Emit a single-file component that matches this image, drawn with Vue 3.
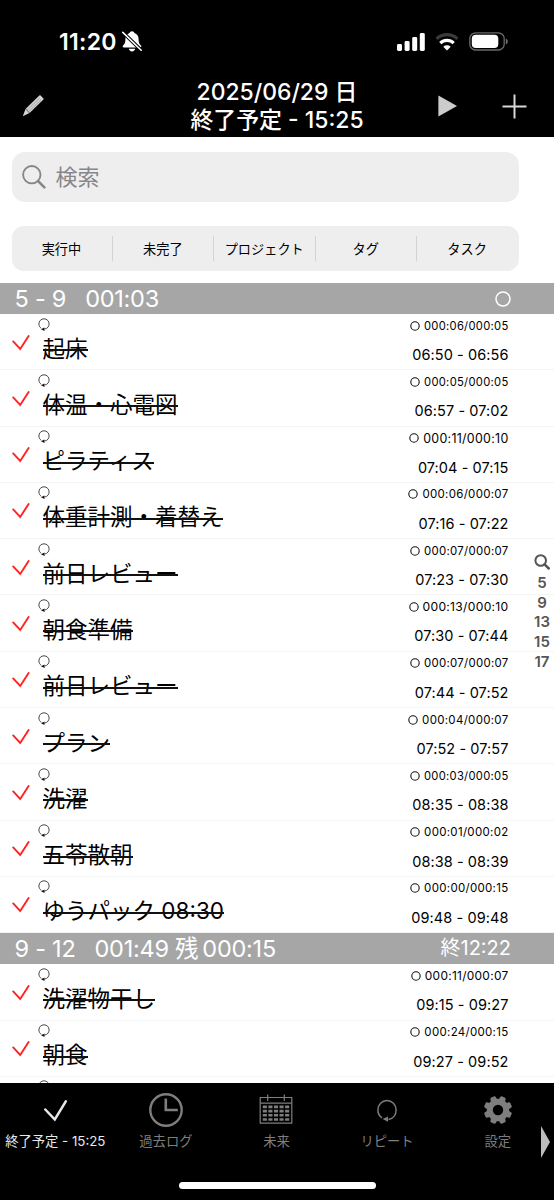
<script setup>
const filters = ['実行中', '未完了', 'プロジェクト', 'タグ', 'タスク'];

// size: font size of the spent/estimate label, fitted to its column
const sections = [
  {
    title: '5 - 9',
    total: '001:03',
    end: '',
    tasks: [
      { name: '起床', spent: '000:06/000:05', range: '06:50 - 06:56', size: 11.2 },
      { name: '体温・心電図', spent: '000:05/000:05', range: '06:57 - 07:02', size: 11.2 },
      { name: 'ピラティス', spent: '000:11/000:10', range: '07:04 - 07:15', size: 12.4 },
      { name: '体重計測・着替え', spent: '000:06/000:07', range: '07:16 - 07:22', size: 11.5 },
      { name: '前日レビュー', spent: '000:07/000:07', range: '07:23 - 07:30', size: 11.4 },
      { name: '朝食準備', spent: '000:13/000:10', range: '07:30 - 07:44', size: 12.1 },
      { name: '前日レビュー', spent: '000:07/000:07', range: '07:44 - 07:52', size: 11.4 },
      { name: 'プラン', spent: '000:04/000:07', range: '07:52 - 07:57', size: 11.5 },
      { name: '洗濯', spent: '000:03/000:05', range: '08:35 - 08:38', size: 11.2 },
      { name: '五苓散朝', spent: '000:01/000:02', range: '08:38 - 08:39', size: 11.5 },
      { name: 'ゆうパック 08:30', spent: '000:00/000:15', range: '09:48 - 09:48', size: 11.5 }
    ]
  },
  {
    title: '9 - 12',
    total: '001:49 残\u2009000:15',
    end: '終12:22',
    tasks: [
      { name: '洗濯物干し', spent: '000:11/000:07', range: '09:15 - 09:27', size: 11.9 },
      { name: '朝食', spent: '000:24/000:15', range: '09:27 - 09:52', size: 11.5 },
      { name: '', spent: '', range: '' }
    ]
  }
];

const indexes = ['5', '9', '13', '15', '17'];

const tabs = [
  { icon: 'check', label: '終了予定 - 15:25', active: true },
  { icon: 'clock', label: '過去ログ' },
  { icon: 'calendar', label: '未来' },
  { icon: 'repeat', label: 'リピート' },
  { icon: 'gear', label: '設定' }
];

const teeth = [22.5, 67.5, 112.5, 157.5, 202.5, 247.5, 292.5, 337.5];
</script>

<template>
  <div class="screen">
    <header class="top">
      <div class="status">
        <span class="clock">11:20</span>
        <svg class="bell" width="20" height="21" viewBox="0 0 20 21">
          <path d="M10 .3c-1.300 0-2.200.8-2.400 1.700C4.800 3 3.400 5.200 3.400 8c0 4-.9 5-2.400 6.600-.7.900-.3 1.800.8 1.800h16.400c1.100 0 1.500-.9.800-1.800C17.500 13 16.600 12 16.600 8c0-2.800-1.400-5-4.200-6C12.200 1.100 11.300.3 10 .3z" fill="#fff" />
          <path d="M6.800 17.800h6.400c-.3 1.500-1.500 2.600-3.200 2.600s-2.900-1.100-3.200-2.600z" fill="#fff" />
          <path d="M0 .6L20 19.900" stroke="#000" stroke-width="3.600" />
          <path d="M.8 1.400L19.200 19.200" stroke="#fff" stroke-width="1.600" stroke-linecap="round" />
        </svg>
        <span class="spacer"></span>
        <svg class="signal" width="28" height="18" viewBox="0 0 28 18">
          <g fill="#fff">
            <rect x="0" y="11" width="5" height="7" rx="1.400" />
            <rect x="7.600" y="8" width="5" height="10" rx="1.400" />
            <rect x="15.200" y="4" width="5" height="14" rx="1.400" />
            <rect x="22.800" y="0" width="5" height="18" rx="1.400" />
          </g>
        </svg>
        <svg class="wifi" width="24" height="18" viewBox="0 0 24 18">
          <path d="M1.600 5.900a15 15 0 0 1 20.800 0" fill="none" stroke="#3a3a3a" stroke-width="3.200" />
          <path d="M5.300 10.100a9.700 9.700 0 0 1 13.400 0" fill="none" stroke="#fff" stroke-width="3.200" />
          <path d="M12 17.600l-3.700-3.900a5.400 5.400 0 0 1 7.400 0z" fill="#fff" />
        </svg>
        <svg class="battery" width="39" height="19" viewBox="0 0 39 19">
          <rect x=".8" y=".8" width="34.400" height="17.200" rx="5.800" fill="none" stroke="#6b6b6b" stroke-width="1.300" />
          <rect x="2.800" y="2.800" width="26.500" height="13.200" rx="4" fill="#fff" />
          <path d="M36.800 6.500c1.300.5 2 1.600 2 2.900s-.7 2.400-2 2.900z" fill="#6b6b6b" />
        </svg>
      </div>
      <div class="nav">
        <svg class="pencil" width="22" height="22" viewBox="0 0 22 22">
          <path d="M17.300.4q.7-.5 1.300.1l2.800 2.900q.5.600 0 1.200L7.600 18 .8 21.300l2.700-7.400z" fill="#d4d4d4" />
          <path d="M17.600 3L5 15.200M19 4.700L6.500 16.900" stroke="#888" stroke-width=".7" />
          <path d="M3.500 13.900l4.100 4.100" stroke="#444" stroke-width=".8" />
        </svg>
        <h1>2025/06/29 日<br>終了予定 - 15:25</h1>
        <svg class="play" width="20" height="22" viewBox="0 0 20 22">
          <path d="M.4.4L19 11 .4 21.600z" fill="#ccc" />
        </svg>
        <svg class="plus" width="25" height="25" viewBox="0 0 25 25">
          <path d="M12.500.5v24M.5 12.500h24" stroke="#d8d8d8" stroke-width="2" />
        </svg>
      </div>
    </header>

    <main class="content">
      <div class="search">
        <svg width="24" height="24" viewBox="0 0 24 24">
          <circle cx="9.800" cy="9.700" r="8.700" fill="none" stroke="#86868b" stroke-width="1.900" />
          <path d="M16 16l6.400 6.400" stroke="#86868b" stroke-width="2.500" stroke-linecap="round" />
        </svg>
        <span>検索</span>
      </div>
      <div class="filters">
        <span v-for="f in filters" :key="f" class="filter">{{ f }}</span>
      </div>

      <section v-for="s in sections" :key="s.title">
        <div class="section-head">
          <span class="section-title">{{ s.title }}</span>
          <span class="section-total">{{ s.total }}</span>
          <span v-if="s.end" class="section-end">{{ s.end }}</span>
          <svg v-else class="ring" width="16" height="16" viewBox="0 0 16 16">
            <circle cx="8" cy="8" r="7" fill="none" stroke="#fff" stroke-width="1.500" />
          </svg>
        </div>
        <div v-for="(t, i) in s.tasks" :key="i" class="task">
          <svg v-if="t.name" class="check" width="18" height="16" viewBox="0 0 18 16">
            <path d="M1.200 6.400L8.200 14 16.600 1" fill="none" stroke="#ff2323" stroke-width="1.900" stroke-linecap="round" />
          </svg>
          <div class="task-main">
            <svg class="loop" width="12" height="13" viewBox="0 0 12 13">
              <path d="M3.300 10.400C1.700 9.300.9 7.700.9 5.900.9 3 3.200.8 6 .8s5.100 2.200 5.100 5.100c0 2.500-1.500 4.600-4.500 5.100" fill="none" stroke="#333" stroke-width=".9" />
              <path d="M3 11.200l3.500-1.700v3.400z" fill="#111" />
            </svg>
            <span v-if="t.name" class="name">{{ t.name }}</span>
          </div>
          <div v-if="t.name" class="times">
            <span class="spent" :style="{ fontSize: t.size + 'px' }">
              <svg width="10" height="10" viewBox="0 0 10 10">
                <circle cx="5" cy="5" r="4.200" fill="none" stroke="#111" stroke-width="1.100" />
              </svg>
              {{ t.spent }}
            </span>
            <span class="range">{{ t.range }}</span>
          </div>
        </div>
      </section>

      <div class="index">
        <svg width="16" height="16" viewBox="0 0 16 16">
          <circle cx="6.700" cy="6.500" r="5.300" fill="none" stroke="#555" stroke-width="2" />
          <path d="M10.600 10.400l4.200 4.100" stroke="#555" stroke-width="2.500" stroke-linecap="round" />
        </svg>
        <span v-for="n in indexes" :key="n">{{ n }}</span>
      </div>
    </main>

    <footer class="tabbar">
      <div class="tabs">
        <div v-for="t in tabs" :key="t.icon" class="tab" :class="{ active: t.active }">
          <svg width="36" height="36" viewBox="0 0 36 36" fill="none" stroke="currentColor">
            <path v-if="t.icon === 'check'" d="M8.300 17.500l9.500 10L28.800 9.300" stroke-width="2.500" stroke-linecap="round" />
            <g v-else-if="t.icon === 'clock'">
              <circle cx="18" cy="18" r="15.700" stroke-width="2.400" />
              <path d="M17.800 6.500V18h12" stroke-width="2.600" />
            </g>
            <g v-else-if="t.icon === 'calendar'">
              <path d="M2.200 5.500h31.600v25.600H2.200zM2.200 11.200h31.600M9.700 2.500v6.500M26.300 2.500v6.500" stroke-width="1.200" />
              <path d="M4.800 14.900h26.400M4.800 19.100h26.400M4.800 23.300h26.400M4.800 27.500h26.400" stroke-width="2.600" stroke-dasharray="4.100 1.475" />
            </g>
            <g v-else-if="t.icon === 'repeat'">
              <path d="M13 25.800C10.400 24 8.900 21.200 8.900 18c0-5.400 4.100-9.600 9.100-9.600s9.100 4.200 9.100 9.600c0 4.800-3 8.700-7.600 9.500" stroke-width="1.500" />
              <path d="M13.600 27l5.400-2.500v5.200z" fill="currentColor" stroke="none" />
            </g>
            <g v-else>
              <circle cx="18" cy="18" r="8.200" stroke-width="6" />
              <path
                v-for="a in teeth"
                :key="a"
                d="M14.500 8.600l.7-3.800q.2-.9 1-.9h3.600q.8 0 1 .9l.7 3.800z"
                :transform="`rotate(${a} 18 18)`"
                fill="currentColor"
                stroke="none"
              />
            </g>
          </svg>
          <span>{{ t.label }}</span>
        </div>
      </div>
      <svg class="more" width="9" height="32" viewBox="0 0 9 32">
        <path d="M0 0l9 16-9 16z" fill="#bdbdbd" />
      </svg>
      <div class="home"></div>
    </footer>
  </div>
</template>

<style>
body {
  margin: 0;
  background: #fff;
}
</style>

<style scoped>
.screen {
  width: 554px;
  height: 1200px;
  display: flex;
  flex-direction: column;
  overflow: hidden;
  background: #fff;
  color: #000;
  font-family: Inter, "Noto Sans CJK JP", sans-serif;
}

svg {
  display: block;
  flex: none;
}

.top {
  height: 137px;
  flex: none;
  background: #000;
  color: #fff;
}

.status {
  height: 78px;
  box-sizing: border-box;
  padding: 5px 46px 0 59px;
  display: flex;
  align-items: center;
}

.clock {
  font-size: 23px;
  font-weight: 600;
  letter-spacing: 0.3px;
}

.bell {
  margin-left: 5px;
}

.spacer {
  flex: 1;
}

.wifi {
  margin-left: 10px;
}

.battery {
  margin-left: 10px;
}

.nav {
  height: 56px;
  display: grid;
  grid-template-columns: 22px 1fr 20px 25px;
  padding: 0 27px 0 22px;
  align-items: center;
}

h1 {
  margin: 0;
  padding-left: 72px;
  font-size: 22.9px;
  line-height: 28px;
  font-weight: 500;
  text-align: center;
  width: 322px;
  white-space: nowrap;
}

.play {
  margin-left: -44px;
}

.content {
  position: relative;
  flex: 1;
  min-height: 0;
  overflow: hidden;
  padding-top: 15px;
}

.search {
  width: 507px;
  height: 50px;
  margin-left: 11.5px;
  box-sizing: border-box;
  padding-left: 10px;
  border-radius: 13px;
  background: #eee;
  color: #86868b;
  display: flex;
  align-items: center;
  gap: 10px;
  font-size: 22px;
}

.search span {
  line-height: 30px;
}

.filters {
  width: 507px;
  height: 45px;
  margin: 24px 0 12px 11.5px;
  border-radius: 12px;
  background: #eee;
  display: grid;
  grid-template-columns: repeat(5, 1fr);
  align-items: center;
}

.filter {
  height: 25px;
  line-height: 26px;
  text-align: center;
  text-indent: -1.5px;
  font-size: 13.2px;
}

.filter + .filter {
  box-shadow: -1px 0 #d3d3d5;
}

.section-head {
  height: 31px;
  box-sizing: border-box;
  padding: 0 43px 0 14.5px;
  background: #a6a6a6;
  color: #fff;
  display: flex;
  align-items: center;
  font-size: 23.5px;
  line-height: 31px;
  letter-spacing: -0.25px;
}

.section-total {
  margin-left: 19px;
}

.section-end {
  margin-left: auto;
  font-size: 20px;
  letter-spacing: 0;
}

.ring {
  margin-left: auto;
  margin-right: 0.5px;
}

.task {
  height: 56.3px;
  box-sizing: border-box;
  border-bottom: 1px solid #f4f4f4;
  padding: 0 45.5px 0 12px;
  display: flex;
}

.check {
  margin-top: 20.5px;
}

.task-main {
  flex: 1;
  margin-left: 12.5px;
}

.task > .task-main:first-child {
  margin-left: 30.5px;
}

.loop {
  margin: 3.5px 0 0 -5px;
}

.name {
  position: relative;
  display: inline-block;
  vertical-align: top;
  margin-top: 2px;
  font-size: 22.5px;
  line-height: 32px;
}

.name::after {
  content: "";
  position: absolute;
  left: 0;
  right: 0;
  top: 16.5px;
  height: 2px;
  background: #111;
}

.times {
  display: flex;
  flex-direction: column;
  align-items: flex-end;
  padding-top: 4px;
}

.spent {
  display: flex;
  align-items: center;
  gap: 4px;
  height: 15px;
  letter-spacing: 0.3px;
}

.range {
  margin-top: 12px;
  font-size: 14.5px;
  line-height: 20px;
  letter-spacing: 0.08px;
}

.index {
  position: absolute;
  right: 2px;
  top: 417px;
  width: 20px;
  display: flex;
  flex-direction: column;
  align-items: center;
  color: #555;
  font-size: 15px;
  font-weight: 600;
  line-height: 19.7px;
}

.index svg {
  margin-bottom: 3px;
}

.tabbar {
  position: relative;
  height: 117px;
  flex: none;
  background: #000;
}

.tabs {
  display: grid;
  grid-template-columns: repeat(5, 110.6px);
  padding-top: 9px;
}

.tab {
  display: flex;
  flex-direction: column;
  align-items: center;
  color: #7e7e7e;
  font-size: 13.3px;
  line-height: 20px;
  white-space: nowrap;
}

.tab span {
  margin-top: 3px;
}

.tab.active {
  color: #e8e8e8;
}

/* scroll hint over the edge of the last tab */
.more {
  position: absolute;
  right: 4px;
  top: 43px;
}

.home {
  width: 197px;
  height: 7px;
  margin: 31px auto 0;
  border-radius: 4px;
  background: #fff;
}
</style>
